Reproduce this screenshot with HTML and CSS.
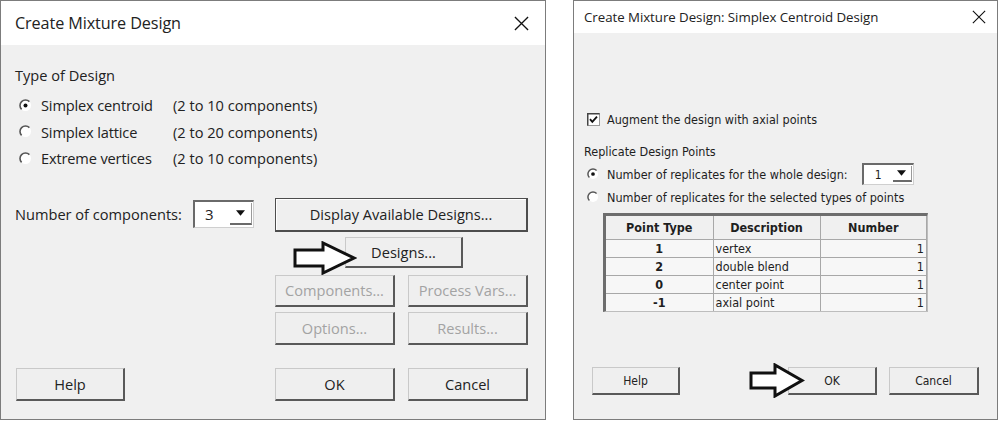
FILE: index.html
```html
<!DOCTYPE html>
<html>
<head>
<meta charset="utf-8">
<link rel="stylesheet" href="styles.css">
</head>
<body>
<div class="screen">
  <section class="dialog dlg-left">
    <header class="titlebar tb-left">
      <span class="title">Create Mixture Design</span>
      <svg class="close close-left" viewBox="0 0 16 16"><path d="M1 1L15 15M15 1L1 15" stroke="#111" stroke-width="1.4" fill="none"/></svg>
    </header>
    <div class="body body-left">
      <div class="group-label">Type of Design</div>
      <div class="radio-list">
        <div class="radio-row">
          <svg class="radio" viewBox="0 0 13 13"><circle cx="6.5" cy="6.5" r="5.5" fill="#fff"/><path d="M2.6 10.4A5.5 5.5 0 0 1 10.4 2.6" stroke="#555" stroke-width="1.6" fill="none"/><circle cx="6.5" cy="6.5" r="2" fill="#111"/></svg>
          <span class="opt">Simplex centroid</span><span class="range">(2 to 10 components)</span>
        </div>
        <div class="radio-row">
          <svg class="radio" viewBox="0 0 13 13"><circle cx="6.5" cy="6.5" r="5.5" fill="#fff"/><path d="M2.6 10.4A5.5 5.5 0 0 1 10.4 2.6" stroke="#555" stroke-width="1.6" fill="none"/></svg>
          <span class="opt">Simplex lattice</span><span class="range">(2 to 20 components)</span>
        </div>
        <div class="radio-row">
          <svg class="radio" viewBox="0 0 13 13"><circle cx="6.5" cy="6.5" r="5.5" fill="#fff"/><path d="M2.6 10.4A5.5 5.5 0 0 1 10.4 2.6" stroke="#555" stroke-width="1.6" fill="none"/></svg>
          <span class="opt">Extreme vertices</span><span class="range">(2 to 10 components)</span>
        </div>
      </div>
      <div class="controls">
        <div class="ncomp">
          <span class="ncomp-label">Number of components:</span>
          <div class="combo combo-left">
            <span class="combo-val">3</span>
            <span class="combo-btn"><svg viewBox="0 0 8 5"><path d="M0 0H8L4 5Z" fill="#111"/></svg></span>
          </div>
        </div>
        <div class="btn-col">
          <div class="btn btn-focus btn-wide">Display Available Designs...</div>
          <div class="designs-row">
            <div class="btn btn-designs">Designs...</div>
            <svg class="arrow arrow-left" viewBox="0 0 64 34"><path d="M2 9H30V2L61 17L30 32V25H2Z" fill="#fff" stroke="#111" stroke-width="3" stroke-linejoin="miter"/></svg>
          </div>
          <div class="btn-grid">
            <div class="btn btn-disabled">Components...</div>
            <div class="btn btn-disabled">Process Vars...</div>
            <div class="btn btn-disabled">Options...</div>
            <div class="btn btn-disabled">Results...</div>
          </div>
        </div>
      </div>
      <div class="footer footer-left">
        <div class="btn btn-help-l">Help</div>
        <div class="btn btn-ok-l">OK</div>
        <div class="btn btn-cancel-l">Cancel</div>
      </div>
    </div>
  </section>

  <section class="dialog dlg-right">
    <header class="titlebar tb-right">
      <span class="title title-right">Create Mixture Design: Simplex Centroid Design</span>
      <svg class="close close-right" viewBox="0 0 16 16"><path d="M1 1L15 15M15 1L1 15" stroke="#111" stroke-width="1.3" fill="none"/></svg>
    </header>
    <div class="body body-right">
      <div class="check-row">
        <svg class="checkbox" viewBox="0 0 13 13"><rect x="0.5" y="0.5" width="12" height="12" fill="#fff" stroke="#9a9a9a"/><path d="M0.75 12.5V0.75H12.5" stroke="#444" stroke-width="1.5" fill="none"/><path d="M3 6.2L5.3 8.8L10 3.6" stroke="#111" stroke-width="1.8" fill="none"/></svg>
        <span>Augment the design with axial points</span>
      </div>
      <div class="group-label-r">Replicate Design Points</div>
      <div class="radio-row-r first">
        <svg class="radio-s" viewBox="0 0 13 13"><circle cx="6.5" cy="6.5" r="5.5" fill="#fff"/><path d="M2.6 10.4A5.5 5.5 0 0 1 10.4 2.6" stroke="#555" stroke-width="1.6" fill="none"/><circle cx="6.5" cy="6.5" r="2" fill="#111"/></svg>
        <span>Number of replicates for the whole design:</span>
        <div class="combo combo-right">
          <span class="combo-val">1</span>
          <span class="combo-btn"><svg viewBox="0 0 8 5"><path d="M0 0H8L4 5Z" fill="#111"/></svg></span>
        </div>
      </div>
      <div class="radio-row-r">
        <svg class="radio-s" viewBox="0 0 13 13"><circle cx="6.5" cy="6.5" r="5.5" fill="#fff"/><path d="M2.6 10.4A5.5 5.5 0 0 1 10.4 2.6" stroke="#555" stroke-width="1.6" fill="none"/></svg>
        <span>Number of replicates for the selected types of points</span>
      </div>
      <div class="table-wrap">
        <table class="grid">
          <thead>
            <tr><th class="c1">Point Type</th><th class="c2">Description</th><th class="c3">Number</th></tr>
          </thead>
          <tbody>
            <tr><td class="pt">1</td><td class="desc">vertex</td><td class="num">1</td></tr>
            <tr><td class="pt">2</td><td class="desc">double blend</td><td class="num">1</td></tr>
            <tr><td class="pt">0</td><td class="desc">center point</td><td class="num">1</td></tr>
            <tr><td class="pt">-1</td><td class="desc">axial point</td><td class="num">1</td></tr>
          </tbody>
        </table>
      </div>
      <div class="footer footer-right">
        <div class="btn btn-r btn-help-r">Help</div>
        <div class="ok-wrap">
          <svg class="arrow arrow-right" viewBox="0 0 56 35"><path d="M2 10H26V2L53 17.5L26 33V25H2Z" fill="#fff" stroke="#111" stroke-width="3"/></svg>
          <div class="btn btn-r btn-ok-r">OK</div>
        </div>
        <div class="btn btn-r btn-cancel-r">Cancel</div>
      </div>
    </div>
  </section>
</div>
</body>
</html>
```

FILE: styles.css
```css
* { box-sizing: border-box; }
html, body { margin: 0; padding: 0; background: #fff; }
body { width: 1000px; height: 421px; overflow: hidden; font-family: "Open Sans", "Noto Sans", sans-serif; color: #222; }

.screen { display: flex; align-items: flex-start; padding-top: 0; }

.dialog { background: #f0f0f0; border: 1px solid #7c7c7c; height: 420px; display: flex; flex-direction: column; }
.dlg-left { width: 546px; }
.dlg-right { width: 425px; margin-left: 27px; }

.titlebar { background: #fff; display: flex; align-items: center; justify-content: space-between; flex: none; }
.tb-left { height: 44px; padding: 0 16px 0 14px; }
.tb-right { height: 32px; padding: 0 11px 0 10px; }
.title { font-size: 16.2px; color: #222; letter-spacing: -0.1px; }
.title-right { font-size: 13.3px; letter-spacing: -0.05px; }
.close { display: block; }
.close-left { width: 15px; height: 15px; margin-top: 1px; }
.close-right { width: 14px; height: 14px; }

.body { flex: 1; position: relative; }
.body-left { padding: 0 17px 0 14px; font-size: 14.6px; }
.group-label { margin-top: 20px; height: 20px; line-height: 20px; }
.radio-list { margin-top: 7px; }
.radio-row { height: 26.5px; display: flex; align-items: center; }
.radio { width: 13px; height: 13px; margin-left: 4px; margin-right: 9px; flex: none; }
.opt { width: 132px; letter-spacing: -0.15px; }
.range { }

.controls { display: flex; margin-top: 26px; }
.ncomp { display: flex; align-items: center; height: 28px; margin-top: 2px; }
.ncomp-label { width: 178px; }

.combo { background: #fff; display: flex; align-items: stretch; border-top: 2px solid #6a6a6a; border-left: 2px solid #6a6a6a; border-right: 1px solid #cfcfcf; border-bottom: 1px solid #cfcfcf; }
.combo-left { width: 61px; height: 28px; }
.combo-val { flex: 1; display: flex; align-items: center; padding-left: 10px; font-size: 15px; }
.combo-btn { width: 22px; display: flex; align-items: center; justify-content: center; border-bottom: 2px solid #6a6a6a; border-right: 1px solid #9a9a9a; margin: 1px 1px 2px 0; background: #fff; }
.combo-btn svg { width: 9px; height: 6px; }

.btn-col { margin-left: auto; width: 253px; display: flex; flex-direction: column; font-size: 14.6px; }
.btn { display: flex; align-items: center; justify-content: center; background: #efefef; border-top: 1px solid #c9c9c9; border-left: 1px solid #c9c9c9; border-right: 2px solid #595959; border-bottom: 2px solid #595959; color: #222; white-space: nowrap; }
.btn-focus { border: 1px solid #4d4d4d; border-right-width: 2px; border-bottom-width: 2px; box-shadow: inset 1px 1px 0 #fff; }
.btn-wide { height: 34px; }
.designs-row { position: relative; margin-top: 5px; height: 31px; }
.btn-designs { margin-left: 70px; width: 118px; height: 31px; }
.arrow { position: absolute; display: block; }
.arrow-left { left: 18px; top: 4px; width: 64px; height: 34px; }
.btn-grid { display: grid; grid-template-columns: 120px 120px; column-gap: 13px; row-gap: 5px; grid-template-rows: 32px 33px; margin-top: 7px; }
.btn-disabled { color: #a3a3a3; }

.footer { display: flex; align-items: center; }
.footer-left { margin-top: 23px; }
.footer-left .btn { height: 33px; }
.btn-help-l { width: 109px; margin-left: 1px; }
.btn-ok-l { width: 120px; margin-left: auto; }
.btn-cancel-l { width: 120px; margin-left: 13px; }

/* right dialog */
.body-right { padding: 0 10px; font-family: "DejaVu Sans Condensed", "DejaVu Sans", sans-serif; font-size: 12.5px; color: #1e1e1e; }
.check-row { display: flex; align-items: center; margin-top: 77px; height: 18px; }
.checkbox { width: 13px; height: 13px; margin-left: 3px; margin-right: 7px; flex: none; }
.group-label-r { margin-top: 15px; height: 18px; line-height: 18px; }
.radio-row-r { display: flex; align-items: center; height: 22px; }
.radio-row-r.first { height: 24px; margin-top: 1px; }
.radio-s { width: 12px; height: 12px; margin-left: 3px; margin-right: 8px; flex: none; }
.combo-right { width: 52px; height: 22px; margin-left: 14px; }
.combo-right .combo-val { font-size: 12px; padding-left: 11px; }
.combo-right .combo-btn { width: 19px; }

.table-wrap { margin-top: 5px; margin-left: 19px; width: 325px; border-top: 3px solid #6d6d6d; border-left: 3px solid #6d6d6d; border-right: 1px solid #bdbdbd; border-bottom: 1px solid #bdbdbd; background: #f4f4f4; }
.grid { border-collapse: collapse; width: 100%; table-layout: fixed; }
.grid th, .grid td { border: 1px solid #a8a8a8; padding: 0 3px; white-space: nowrap; }
.grid tr:first-child th { border-top: none; }
.grid th:first-child, .grid td:first-child { border-left: none; }
.grid th { height: 23px; font-weight: bold; font-size: 12.5px; text-align: center; background: #f0f0f0; }
.grid td { height: 18px; background: #f7f7f7; }
.grid .c1 { width: 107px; }
.grid .c2 { width: 107px; }
.grid .pt { text-align: center; font-weight: bold; }
.grid .desc { text-align: left; padding-left: 2px; }
.grid .num { text-align: right; padding-right: 2px; }
.grid tbody tr:last-child td { border-bottom: none; }

.footer-right { margin-top: 55px; }
.btn-r { height: 28px; font-size: 12px; }
.btn-help-r { width: 88px; margin-left: 8px; }
.ok-wrap { position: relative; margin-left: auto; }
.btn-ok-r { width: 89px; }
.arrow-right { left: -39px; top: -4px; width: 56px; height: 35px; }
.btn-cancel-r { width: 90px; margin-left: 12px; margin-right: 8px; }
```
